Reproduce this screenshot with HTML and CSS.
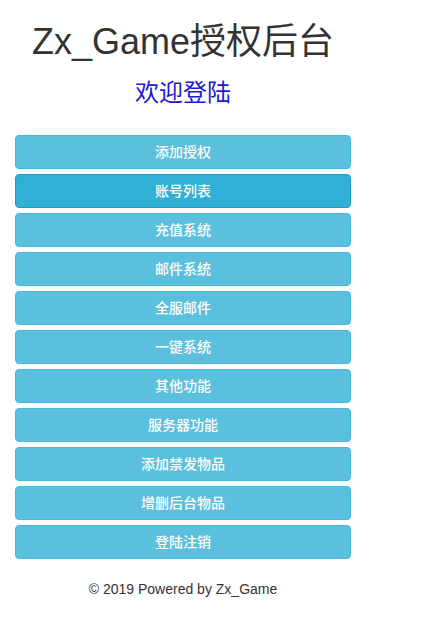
FILE: index.html
```html
<!DOCTYPE html>
<html lang="zh-CN">
<head>
<meta charset="utf-8">
<title>Zx_Game授权后台</title>
<link rel="stylesheet" href="styles.css">
</head>
<body>
<div class="page">
  <h1 class="title">Zx_Game授权后台</h1>
  <div class="welcome">欢迎登陆</div>
  <nav class="menu">
    <a class="btn" href="#">添加授权</a>
    <a class="btn btn-active" href="#">账号列表</a>
    <a class="btn" href="#">充值系统</a>
    <a class="btn" href="#">邮件系统</a>
    <a class="btn" href="#">全服邮件</a>
    <a class="btn" href="#">一键系统</a>
    <a class="btn" href="#">其他功能</a>
    <a class="btn" href="#">服务器功能</a>
    <a class="btn" href="#">添加禁发物品</a>
    <a class="btn" href="#">增删后台物品</a>
    <a class="btn" href="#">登陆注销</a>
  </nav>
  <footer class="footer">© 2019 Powered by Zx_Game</footer>
</div>
</body>
</html>
```
FILE: styles.css
```css
html, body {
  margin: 0;
  padding: 0;
  background: #fff;
}
body {
  font-family: "Liberation Sans", Arial, "Noto Sans CJK SC", sans-serif;
  font-size: 14px;
  line-height: 20px;
  color: #333;
}
.page {
  width: 336px;
  padding: 0 15px;
  text-align: center;
}
.title {
  margin: 22px 0 10px;
  font-size: 36px;
  line-height: 1.1;
  font-weight: 400;
  color: #333;
}
.welcome {
  margin-top: 18px;
  font-size: 24px;
  line-height: 26px;
  color: #1a1ad6;
}
.menu {
  display: flex;
  flex-direction: column;
  gap: 5px;
  margin-top: 29px;
}
.btn {
  display: block;
  box-sizing: border-box;
  height: 34px;
  padding: 6px 12px;
  border: 1px solid #46b8da;
  border-radius: 4px;
  background: #5bc0de;
  color: #fff;
  font-size: 14px;
  font-weight: 500;
  line-height: 20px;
  text-decoration: none;
}
.btn-active {
  background: #31b0d5;
  border-color: #269abc;
}
.footer {
  margin-top: 20px;
  line-height: 20px;
  color: #333;
}
```
